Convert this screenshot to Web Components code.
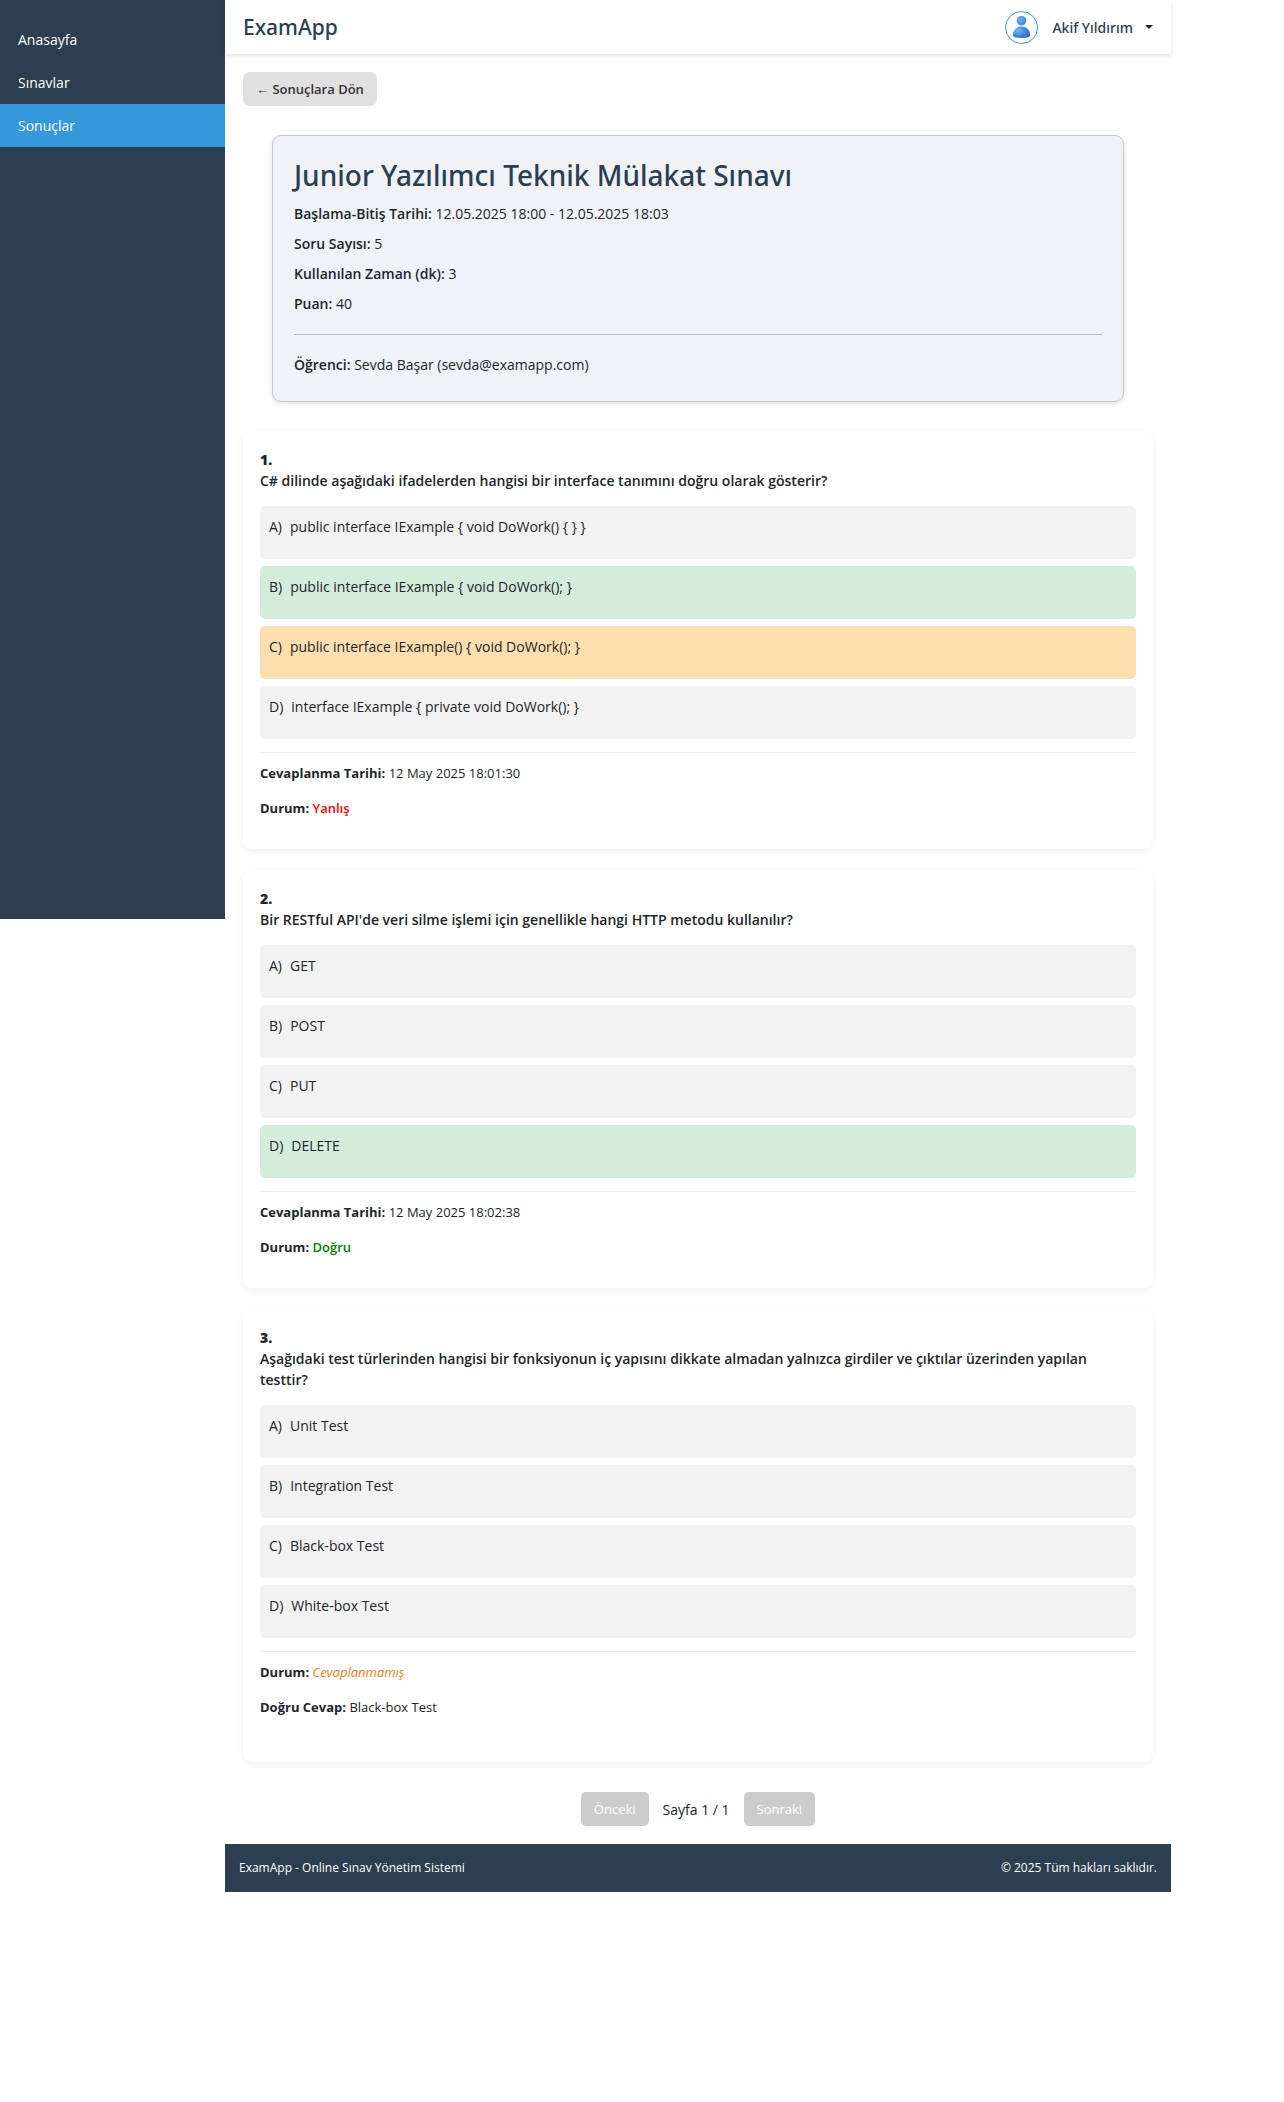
<!DOCTYPE html>
<html lang="tr">
<head>
<meta charset="utf-8">
<title>ExamApp</title>
<style>
  body { margin: 0; background: #fefefe; color: #212529; font: 14px/21px "Open Sans", "Noto Sans", sans-serif; }
</style>
</head>
<body>
<exam-app>
  <side-nav slot="nav">
    <nav-item href="#anasayfa">Anasayfa</nav-item>
    <nav-item href="#sinavlar">Sınavlar</nav-item>
    <nav-item href="#sonuclar" active>Sonuçlar</nav-item>
  </side-nav>
  <app-header slot="header" brand="ExamApp">Akif Yıldırım</app-header>

  <back-button>← Sonuçlara Dön</back-button>

  <exam-summary>
    <span slot="title">Junior Yazılımcı Teknik Mülakat Sınavı</span>
    <info-row label="Başlama-Bitiş Tarihi:">12.05.2025 18:00 - 12.05.2025 18:03</info-row>
    <info-row label="Soru Sayısı:">5</info-row>
    <info-row label="Kullanılan Zaman (dk):">3</info-row>
    <info-row label="Puan:">40</info-row>
    <info-row slot="student" label="Öğrenci:">Sevda Başar (sevda@examapp.com)</info-row>
  </exam-summary>

  <question-card number="1.">
    <span slot="question">C# dilinde aşağıdaki ifadelerden hangisi bir interface tanımını doğru olarak gösterir?</span>
    <answer-option letter="A)">public interface IExample { void DoWork() { } }</answer-option>
    <answer-option letter="B)" state="correct">public interface IExample { void DoWork(); }</answer-option>
    <answer-option letter="C)" state="chosen">public interface IExample() { void DoWork(); }</answer-option>
    <answer-option letter="D)">interface IExample { private void DoWork(); }</answer-option>
    <info-row slot="result" label="Cevaplanma Tarihi:">12 May 2025 18:01:30</info-row>
    <info-row slot="result" label="Durum:" tone="wrong">Yanlış</info-row>
  </question-card>

  <question-card number="2.">
    <span slot="question">Bir RESTful API'de veri silme işlemi için genellikle hangi HTTP metodu kullanılır?</span>
    <answer-option letter="A)">GET</answer-option>
    <answer-option letter="B)">POST</answer-option>
    <answer-option letter="C)">PUT</answer-option>
    <answer-option letter="D)" state="correct">DELETE</answer-option>
    <info-row slot="result" label="Cevaplanma Tarihi:">12 May 2025 18:02:38</info-row>
    <info-row slot="result" label="Durum:" tone="right">Doğru</info-row>
  </question-card>

  <question-card number="3." unanswered>
    <span slot="question">Aşağıdaki test türlerinden hangisi bir fonksiyonun iç yapısını dikkate almadan yalnızca girdiler ve çıktılar üzerinden yapılan testtir?</span>
    <answer-option letter="A)">Unit Test</answer-option>
    <answer-option letter="B)">Integration Test</answer-option>
    <answer-option letter="C)">Black-box Test</answer-option>
    <answer-option letter="D)">White-box Test</answer-option>
    <info-row slot="result" label="Durum:" tone="empty">Cevaplanmamış</info-row>
    <info-row slot="result" label="Doğru Cevap:">Black-box Test</info-row>
  </question-card>

  <page-nav>Sayfa 1 / 1</page-nav>

  <app-footer slot="footer">
    <span>ExamApp - Online Sınav Yönetim Sistemi</span>
    <span>© 2025 Tüm hakları saklıdır.</span>
  </app-footer>
</exam-app>

<script>
  const define = (name, render) => customElements.define(name, class extends HTMLElement {
    constructor() {
      super();
      this.attachShadow({ mode: 'open' });
    }
    connectedCallback() {
      this.shadowRoot.innerHTML = render(this);
    }
  });

  define('exam-app', () => `
    <style>
      :host { display: flex; align-items: flex-start; margin-right: 113px; }
      .column { flex: 1; min-width: 0; }
      main { padding: 18px; }
    </style>
    <slot name="nav"></slot>
    <div class="column">
      <slot name="header"></slot>
      <main><slot></slot></main>
      <slot name="footer"></slot>
    </div>`);

  define('side-nav', () => `
    <style>
      :host { display: block; flex: 0 0 225px; min-height: 919px; box-sizing: border-box; padding-top: 18px; background: #2c3e50; }
    </style>
    <nav><slot></slot></nav>`);

  define('nav-item', el => `
    <style>
      :host { display: block; color: #fff; font-size: 14px; }
      :host([active]) { background: #3498db; }
      a { display: block; padding: 11px 18px; color: inherit; text-decoration: none; }
    </style>
    <a href="${el.getAttribute('href')}"><slot></slot></a>`);

  define('app-header', el => `
    <style>
      :host { display: flex; align-items: center; justify-content: space-between; height: 54px; padding: 0 18px;
              background: #fff; box-shadow: 0 2px 4px rgba(0,0,0,.1); color: #2c3e50;
              font-family: "Noto Sans", sans-serif; }
      .brand { font-size: 21px; line-height: 26px; font-weight: 500; }
      button { display: flex; align-items: center; padding: 0; border: 0; background: none; color: inherit;
               font: inherit; font-weight: 500; }
      svg { display: block; }
      .name { margin: 0 12px 0 14px; }
    </style>
    <span class="brand">${el.getAttribute('brand')}</span>
    <button type="button" aria-haspopup="true">
      <svg width="33" height="33" viewBox="0 0 33 33" aria-hidden="true">
        <defs>
          <radialGradient id="head" cx=".4" cy=".4" r=".7"><stop offset="0" stop-color="#72b4f4"/><stop offset="1" stop-color="#3c7ad8"/></radialGradient>
          <radialGradient id="torso" cx=".3" cy=".35" r=".8"><stop offset="0" stop-color="#7ab8f5"/><stop offset=".55" stop-color="#4685e0"/><stop offset="1" stop-color="#3560c8"/></radialGradient>
        </defs>
        <circle cx="16.5" cy="16.5" r="16" fill="#fff" stroke="#3498db"/>
        <circle cx="16.500" cy="9.700" r="4.800" fill="url(#head)"/>
        <path d="M7.900 24C7.900 19 11.500 15.500 16.500 15.500S25.100 19 25.100 24C25.100 26.300 21.800 27 16.500 27S7.900 26.300 7.900 24z" fill="url(#torso)"/>
      </svg>
      <span class="name"><slot></slot></span>
      <svg width="8" height="4" viewBox="0 0 8 4" aria-hidden="true"><path d="M0 0h8L4 4z" fill="#212529"/></svg>
    </button>`);

  define('back-button', () => `
    <style>
      :host { display: block; }
      button { padding: 7px 13px; border: 0; border-radius: 7px; background: #e0e0e0; color: #333;
               font: inherit; font-size: 13px; line-height: 20px; font-weight: 600; }
    </style>
    <button type="button"><slot></slot></button>`);

  define('exam-summary', () => `
    <style>
      :host { display: block; box-sizing: border-box; max-width: 852px; margin: 29px auto; padding: 22px 21px 26px;
              background: #eff3f8; border: 1px solid #c4c8ce; border-radius: 9px; box-shadow: 0 2px 5px rgba(0,0,0,.1); }
      h2 { margin: 0 0 11px; color: #2c3e50; font-family: "Noto Sans", sans-serif; font-size: 28px; line-height: 34px; font-weight: 500; }
      .rows { display: flex; flex-direction: column; gap: 9px; }
      hr { margin: 20px 0 19px; border: 0; border-top: 1px solid #b9bdc3; }
    </style>
    <h2><slot name="title"></slot></h2>
    <div class="rows"><slot></slot></div>
    <hr>
    <slot name="student"></slot>`);

  define('info-row', el => `
    <style>
      :host { display: block; }
      :host([slot=result]) { font-size: 13px; }
      strong { font-weight: 600; }
      :host([slot=result]) strong { font-weight: 700; }
      :host([tone=wrong]) .value { color: #f00; font-weight: 600; }
      :host([tone=right]) .value { color: #008000; font-weight: 600; }
      :host([tone=empty]) .value { color: #e67e22; font-style: italic; }
    </style>
    <strong>${el.getAttribute('label')}</strong> <span class="value"><slot></slot></span>`);

  define('question-card', el => `
    <style>
      :host { display: block; margin-bottom: 21px; padding: 18px 17px 30px; background: #fff; border-radius: 9px;
              box-shadow: 0 2px 7px rgba(0,0,0,.05); }
      :host([unanswered]) { padding-bottom: 44px; }
      h3 { margin: 0 0 15px; font-size: inherit; line-height: inherit; font-weight: 600; }
      .number { display: block; font-weight: 800; }
      .options { display: flex; flex-direction: column; gap: 7px; }
      .results { display: flex; flex-direction: column; gap: 14px; margin-top: 13px; padding-top: 10px; border-top: 1px solid #eaeaea; }
    </style>
    <h3><span class="number">${el.getAttribute('number')}</span><slot name="question"></slot></h3>
    <div class="options"><slot></slot></div>
    <div class="results"><slot name="result"></slot></div>`);

  define('answer-option', el => `
    <style>
      :host { display: flex; gap: 8px; padding: 10px 9px 22px; border-radius: 5px; background: #f2f2f2; }
      :host([state=correct]) { background: #d4edda; }
      :host([state=chosen]) { background: #ffdfb0; }
    </style>
    <span>${el.getAttribute('letter')}</span><span><slot></slot></span>`);

  define('page-nav', () => `
    <style>
      :host { display: flex; justify-content: center; align-items: center; gap: 14px; margin-top: 30px; }
      button { padding: 7px 13px; border: 0; border-radius: 5px; background: #ccc; color: #fff;
               font: inherit; font-size: 13px; line-height: 20px; }
    </style>
    <button type="button" disabled>Önceki</button>
    <span><slot></slot></span>
    <button type="button" disabled>Sonraki</button>`);

  define('app-footer', () => `
    <style>
      :host { display: flex; justify-content: space-between; padding: 14px; background: #2c3e50; color: #fff;
              font-size: 12px; line-height: 20px; }
    </style>
    <slot></slot>`);
</script>
</body>
</html>
